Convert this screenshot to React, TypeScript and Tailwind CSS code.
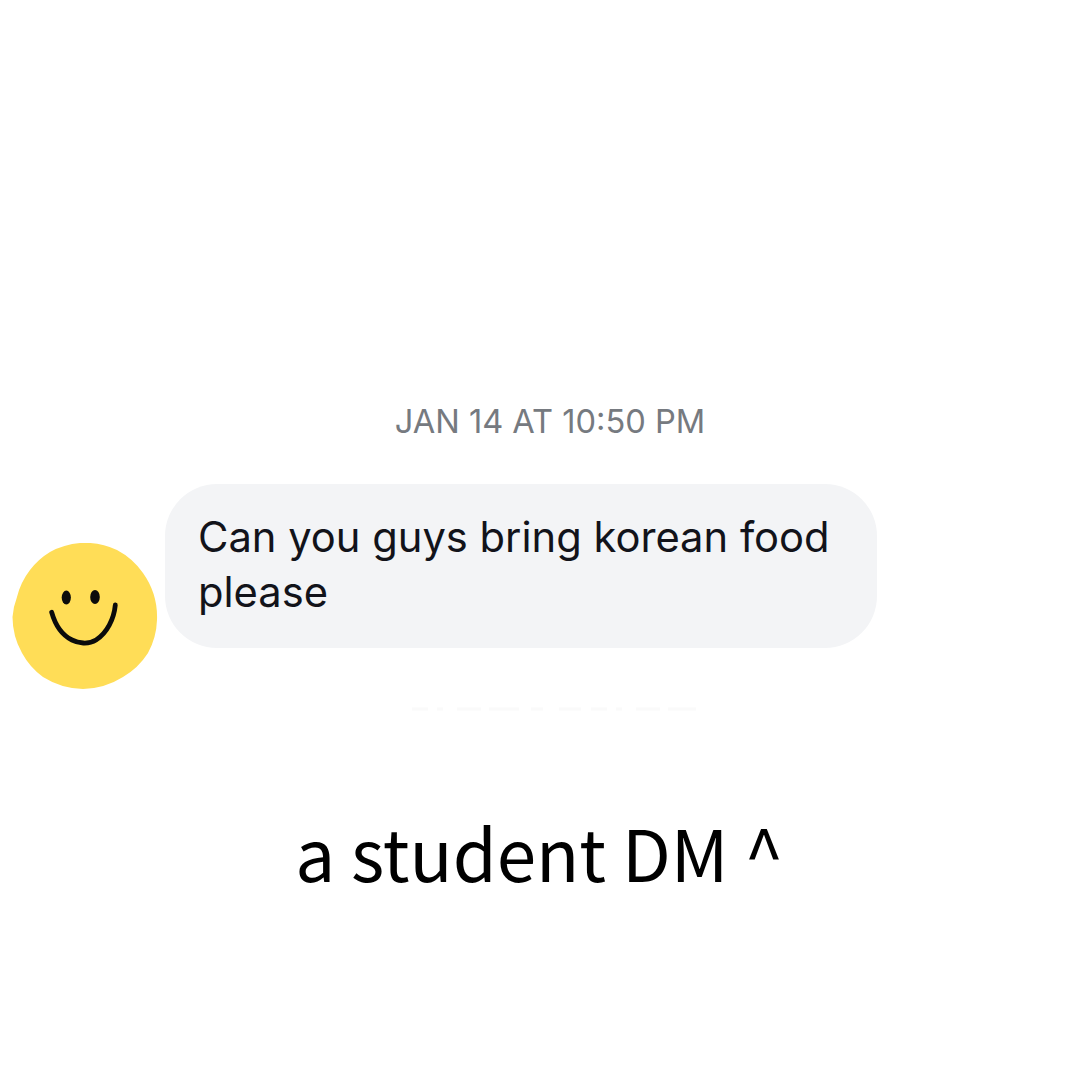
function SmileyAvatar() {
  return (
    <svg width="146" height="147" viewBox="12 543 146 147" fill="none" aria-hidden="true" className="mt-[59px] shrink-0">
      <path
        d="M80 543A75 75 0 0 1 117 550A74 74 0 0 1 143 573A76 76 0 0 1 157 620A74 74 0 0 1 148 653A74 74 0 0 1 123 677A78 78 0 0 1 83 689A78 78 0 0 1 43 677A72 72 0 0 1 22 653A74 74 0 0 1 12.5 617A72 72 0 0 1 17 597A72 72 0 0 1 30 570A72 72 0 0 1 50 552A74 74 0 0 1 80 543Z"
        fill="#FFDD57"
      />
      <ellipse cx="66.3" cy="597.6" rx="4.6" ry="7" fill="#0b0b0b" />
      <ellipse cx="95" cy="597" rx="4.8" ry="7" fill="#0b0b0b" />
      <path
        d="M51.7 612.3C55 624 62 635 72 640C78 643 88 645 96 640C107 633 114 619 115.3 605"
        stroke="#0b0b0b"
        strokeWidth="4.8"
        strokeLinecap="round"
      />
    </svg>
  );
}

export default function App() {
  return (
    <div className="flex h-[1080px] w-[1080px] flex-col bg-white pt-[402px]">
      <p className="ml-[20px] text-center font-['Inter',sans-serif] text-[32.6px] leading-[38px] text-[#767a80]">
        JAN 14 AT 10:50 PM
      </p>

      <div className="mt-[44px] flex items-start gap-[7px] pl-[12px]">
        <SmileyAvatar />
        <div className="flex h-[164px] w-[712px] items-center rounded-[52px] bg-[#f3f4f6] pb-[2px] pl-[33px] pr-[34px]">
          <p className="font-['Inter',sans-serif] text-[41.7px] leading-[55px] text-[#12131a]">
            Can you guys bring korean food please
          </p>
        </div>
      </div>

      {/* faint smudge under the bubble */}
      <svg width="284" height="6" viewBox="0 0 284 6" aria-hidden="true" className="mt-[16px] ml-[412px] shrink-0">
        <path d="M0 3H284" stroke="#fafafa" strokeWidth="3" strokeDasharray="16 9 6 14 24 8 30 12 12 16 22 10" />
      </svg>

      <p className="mt-[88px] ml-[-1px] text-center font-['Noto_Sans_CJK_KR',sans-serif] text-[71px] leading-[102px] text-black">
        a student DM ^
      </p>
    </div>
  );
}
